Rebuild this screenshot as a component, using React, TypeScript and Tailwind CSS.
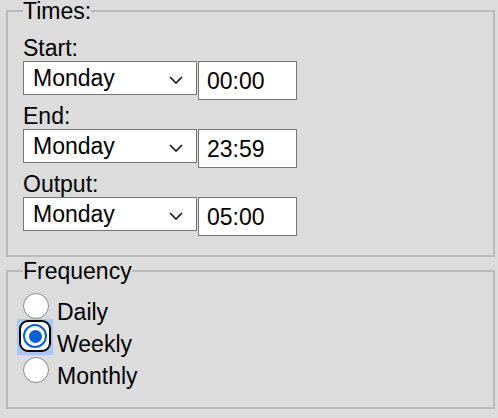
import React from "react";

const font = { fontFamily: '"Liberation Sans", Arial, sans-serif' };

function Chevron() {
  return (
    <svg width="14" height="8" viewBox="0 0 14 8" className="absolute right-[13px] top-[14px] pointer-events-none">
      <path d="M1 1 L7 7 L13 1" fill="none" stroke="#111" strokeWidth="1.6" />
    </svg>
  );
}

function Row({ label, day, time }: { label: string; day: string; time: string }) {
  return (
    <div className="flex flex-col">
      <div className="h-[26px] leading-[26px] text-[23px] text-black">{label}</div>
      <div className="flex items-start">
        <div className="relative w-[174px] h-[34px] bg-white border border-[#767676] flex items-center pl-[9px] text-[23px] text-black leading-[26px]">
          {day}
          <Chevron />
        </div>
        <div className="ml-[1px] w-[99px] h-[39px] bg-white border border-[#767676] flex items-center pl-[8px] text-[23px] text-black leading-[26px]">
          {time}
        </div>
      </div>
    </div>
  );
}

function Radio({ label, checked }: { label: string; checked?: boolean }) {
  return (
    <div className="flex h-[32px] items-start">
      <div className="relative w-[34px] h-[32px] shrink-0">
        {checked ? (
          <div className="absolute left-[-6px] top-[-3px] w-[36px] h-[36px] bg-[#a9c6f5]">
            <div className="absolute left-[2px] top-[1px] w-[32px] h-[32px] rounded-[9px] border-[2.5px] border-black bg-white flex items-center justify-center">
              <div className="w-[24px] h-[24px] rounded-full border-[2px] border-[#0a5fd2] bg-white flex items-center justify-center">
                <div className="w-[13px] h-[13px] rounded-full bg-[#0a5fd2]" />
              </div>
            </div>
          </div>
        ) : (
          <div className="absolute left-0 top-[3px] w-[26px] h-[26px] rounded-full border border-[#8a8a8a] bg-white" />
        )}
      </div>
      <div className="mt-[9px] h-[26px] leading-[26px] text-[23px] text-black">{label}</div>
    </div>
  );
}

export default function App() {
  return (
    <div className="w-[498px] h-[418px] bg-[#dcdcdc] overflow-hidden" style={font}>
      <fieldset className="ml-[6px] w-[489px] border-2 border-[#b9b9b9] px-[15px] pt-[13px] pb-[19px]">
        <legend className="text-[23px] leading-[22px] text-black">Times:</legend>
        <div className="flex flex-col gap-[3px]">
          <Row label="Start:" day="Monday" time="00:00" />
          <Row label="End:" day="Monday" time="23:59" />
          <Row label="Output:" day="Monday" time="05:00" />
        </div>
      </fieldset>
      <fieldset className="ml-[6px] mt-[3px] w-[489px] border-2 border-[#b9b9b9] px-[15px] pt-[8px] pb-[21px]">
        <legend className="text-[23px] leading-[22px] text-black">Frequency</legend>
        <div className="flex flex-col">
          <Radio label="Daily" />
          <Radio label="Weekly" checked />
          <Radio label="Monthly" />
        </div>
      </fieldset>
    </div>
  );
}
